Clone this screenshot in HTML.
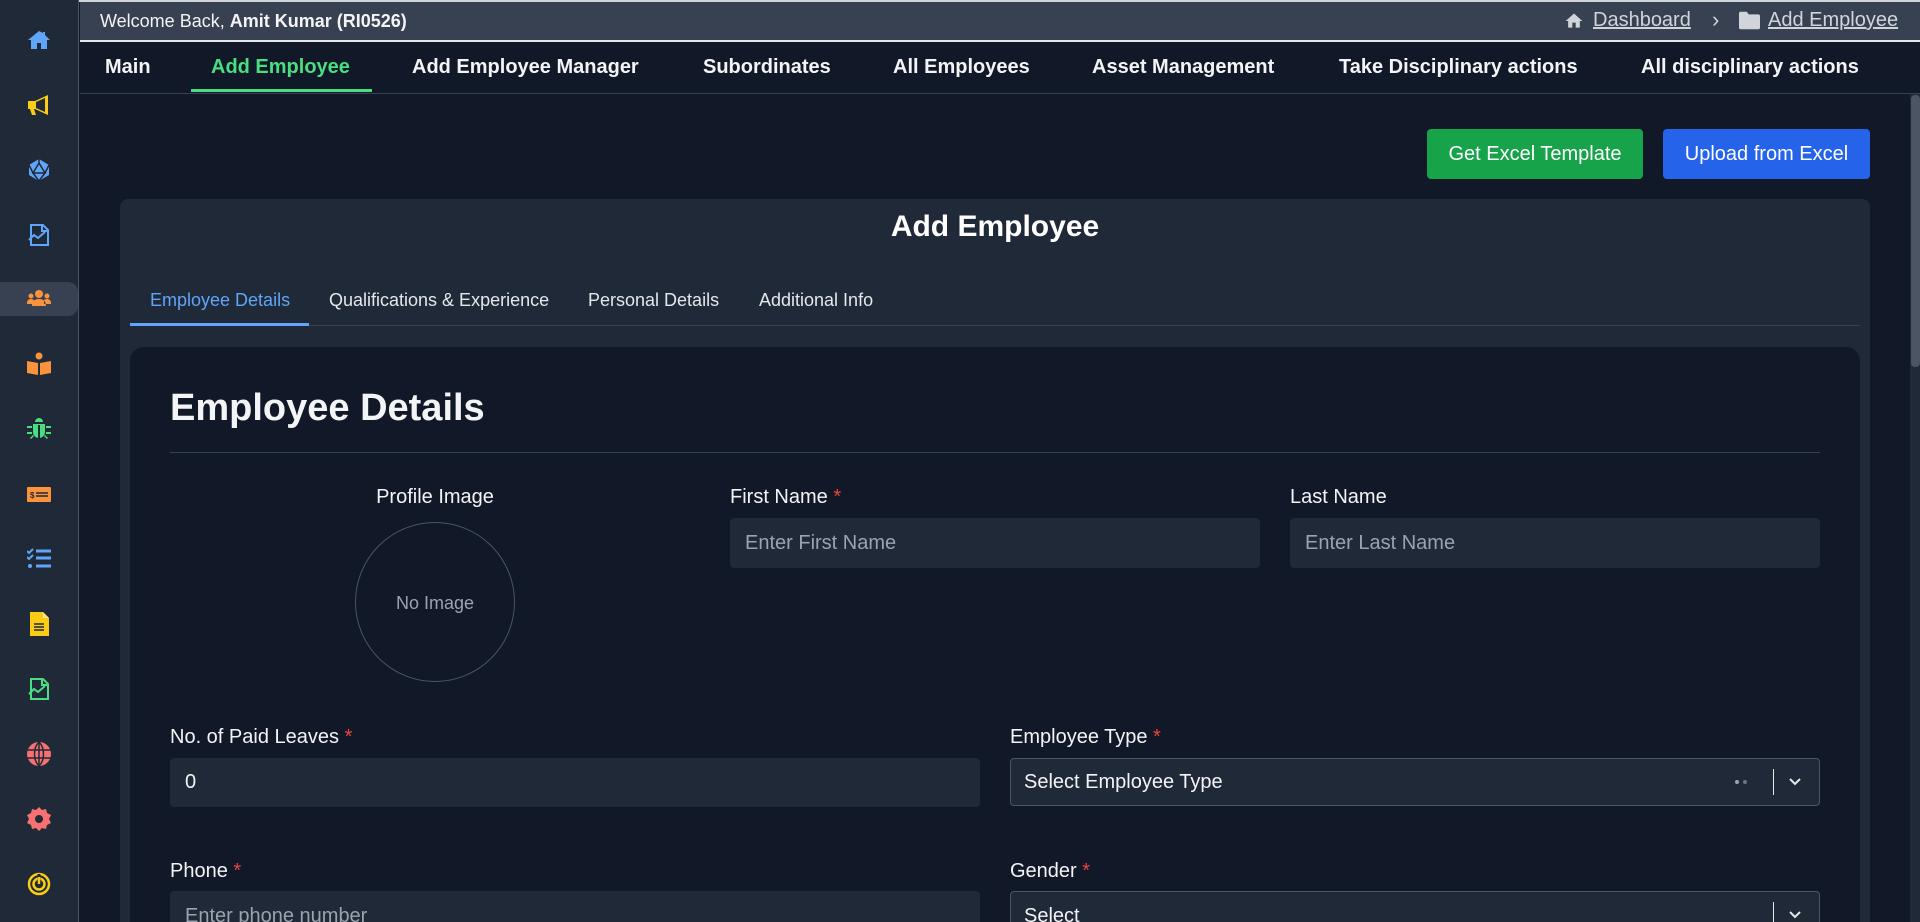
<!DOCTYPE html>
<html style="width:1920px;height:922px;overflow:hidden"><head><meta charset="utf-8"><style>
*{box-sizing:border-box;margin:0;padding:0}
body{width:1920px;height:922px;overflow:hidden;background:#111827;font-family:"Liberation Sans",Arial,sans-serif;color:#f3f4f6;position:relative}
.a{position:absolute;white-space:nowrap}
.side{left:0;top:0;width:79px;height:922px;background:#1f2937;border-right:1px solid #4b5563}
.ic{position:absolute;left:27px;width:24px;height:24px}
.top{left:80px;top:2px;width:1840px;height:40px;background:#374151;border-bottom:2px solid #e5e7eb}
.nav{left:80px;top:44px;width:1840px;height:50px;background:#111827;border-bottom:1px solid #374151}
.ni{position:absolute;top:12px;font-size:20px;font-weight:bold;color:#f3f4f6}
.lbl{font-size:20px;color:#f3f4f6}
.req{color:#ef4444}
.inp{background:#1f2937;border-radius:4px;font-size:20px;color:#9ca3af;padding-left:15px;display:flex;align-items:center}
.tab{position:absolute;top:290px;font-size:18px;color:#e5e7eb}
</style></head><body>
<div class="a" style="left:0;top:0;width:1920px;height:2px;background:#d1d5db"></div>
<div class="a side">
<div class="a" style="left:0;top:282px;width:78px;height:34px;background:#374151;border-radius:0 10px 10px 0"></div>
<svg class="ic" style="top:28px" viewBox="0 0 24 24"><path d="M12 3L1 12h3v9h6v-6h4v6h6v-9h3L18 7V4h-2v1z" fill="#60a5fa"/></svg>
<svg class="ic" style="top:93px" viewBox="0 0 24 24"><path d="M1 8h7l13-6v20L8 16H7l2 6H5l-2-6H1z" fill="#facc15"/><path d="M9 9v6l9 4V5z" fill="#1f2937"/></svg>
<svg class="ic" style="top:158px" viewBox="0 0 24 24"><polygon points="12,1 22,7 22,17 12,23 2,17 2,7" fill="#60a5fa"/><path d="M12 5L6 15h12z M12 1v4 M2 7l4 8 M22 7l-4 8 M6 15l6 8 6-8" stroke="#1f2937" stroke-width="1.5" fill="none"/></svg>
<svg class="ic" style="top:223px" viewBox="0 0 24 24"><path d="M4 2h12l5 5v15H4z M15 2v6h6" stroke="#60a5fa" stroke-width="2" fill="none"/><path d="M2 17l5-5 4 3 7-6" stroke="#60a5fa" stroke-width="2" fill="none"/></svg>
<svg class="ic" style="top:287px" viewBox="0 0 24 24"><circle cx="12" cy="7" r="4" fill="#fb923c"/><circle cx="4" cy="9" r="2.5" fill="#fb923c"/><circle cx="20" cy="9" r="2.5" fill="#fb923c"/><path d="M5 19c0-5 3-7 7-7s7 2 7 7z M0 16c0-3 2-4 4-4s3 1 3 2v3H0z M24 16c0-3-2-4-4-4s-3 1-3 2v3h7z" fill="#fb923c"/></svg>
<svg class="ic" style="top:352px" viewBox="0 0 24 24"><circle cx="12" cy="4" r="3.5" fill="#fb923c"/><path d="M0 9l11 2v12L0 21z M24 9l-11 2v12l11-2z" fill="#fb923c"/></svg>
<svg class="ic" style="top:417px" viewBox="0 0 24 24"><path d="M8 5a4 4 0 0 1 8 0z M6 7h12v8a6 6 0 0 1-12 0z M0 9h5v2H0z M19 9h5v2h-5z M0 15h5v2H0z M19 15h5v2h-5z M3 21l3-3 1 1-3 3z M21 21l-3-3-1 1 3 3z" fill="#4ade80"/><rect x="11" y="8" width="2" height="13" fill="#1f2937"/></svg>
<svg class="ic" style="top:482px" viewBox="0 0 24 24"><rect x="0" y="5" width="24" height="15" rx="1" fill="#fb923c"/><text x="3" y="16" font-size="8" font-weight="bold" fill="#1f2937" font-family="Liberation Sans">$</text><path d="M9 11h12 M9 14h12" stroke="#1f2937" stroke-width="1.5"/></svg>
<svg class="ic" style="top:547px" viewBox="0 0 24 24"><path d="M0 4l2 2 4-4 M0 10l2 2 4-4" stroke="#60a5fa" stroke-width="2" fill="none"/><circle cx="3" cy="19" r="2" fill="#60a5fa"/><path d="M9 4h15 M9 11h15 M9 19h15" stroke="#60a5fa" stroke-width="3"/></svg>
<svg class="ic" style="top:612px" viewBox="0 0 24 24"><path d="M3 0h13l6 6v18H3z" fill="#facc15"/><path d="M16 0v6h6" fill="#fde68a"/><path d="M7 12h10 M7 15h10 M7 18h10" stroke="#1f2937" stroke-width="1.5"/></svg>
<svg class="ic" style="top:677px" viewBox="0 0 24 24"><path d="M4 2h12l5 5v15H4z M15 2v6h6" stroke="#4ade80" stroke-width="2" fill="none"/><path d="M2 17l5-5 4 3 7-6" stroke="#4ade80" stroke-width="2" fill="none"/></svg>
<svg class="ic" style="top:742px" viewBox="0 0 24 24"><circle cx="12" cy="12" r="12" fill="#f87171"/><path d="M0 8h24 M0 16h24 M12 0v24 M12 0c-6 6-6 18 0 24 M12 0c6 6 6 18 0 24" stroke="#1f2937" stroke-width="1.5" fill="none"/></svg>
<svg class="ic" style="top:807px" viewBox="0 0 24 24"><path d="M12 0l3 3 4-1 1 4 4 2-2 4 2 4-4 2-1 4-4-1-3 3-3-3-4 1-1-4-4-2 2-4-2-4 4-2 1-4 4 1z" fill="#f87171"/><circle cx="12" cy="12" r="4" fill="#1f2937"/></svg>
<svg class="ic" style="top:872px" viewBox="0 0 24 24"><circle cx="12" cy="12" r="10" stroke="#facc15" stroke-width="2.5" fill="none"/><circle cx="12" cy="12" r="5.5" stroke="#facc15" stroke-width="2.5" fill="none"/><path d="M12 2v10" stroke="#1f2937" stroke-width="3"/><path d="M12 5v7" stroke="#facc15" stroke-width="2.5"/></svg>
</div>
<div class="a top">
<div class="a" style="left:20px;top:9px;font-size:18px;color:#f3f4f6">Welcome Back, <b>Amit Kumar (RI0526)</b></div>
<svg class="a" style="left:1484px;top:9px" width="20" height="20" viewBox="0 0 24 24"><path d="M12 3L2 12h3v8h5v-6h4v6h5v-8h3z" fill="#d1d5db"/></svg>
<div class="a" style="left:1513px;top:7px;font-size:20px;color:#d1d5db;text-decoration:underline">Dashboard</div>
<div class="a" style="left:1632px;top:5px;font-size:22px;color:#d1d5db">›</div>
<svg class="a" style="left:1659px;top:9px" width="21" height="19" viewBox="0 0 24 20"><path d="M0 2a2 2 0 0 1 2-2h7l2 3h11a2 2 0 0 1 2 2v13a2 2 0 0 1-2 2H2a2 2 0 0 1-2-2z" fill="#d1d5db"/></svg>
<div class="a" style="left:1688px;top:7px;font-size:20px;color:#d1d5db;text-decoration:underline">Add Employee</div>
</div>
<div class="a nav">
<div class="ni" style="left:25px">Main</div>
<div class="ni" style="left:131px;color:#4ade80">Add Employee</div>
<div class="a" style="left:111px;top:45px;width:181px;height:3px;background:#4ade80"></div>
<div class="ni" style="left:332px">Add Employee Manager</div>
<div class="ni" style="left:623px">Subordinates</div>
<div class="ni" style="left:813px">All Employees</div>
<div class="ni" style="left:1012px">Asset Management</div>
<div class="ni" style="left:1259px">Take Disciplinary actions</div>
<div class="ni" style="left:1561px">All disciplinary actions</div>
</div>
<div class="a" style="left:1910px;top:94px;width:10px;height:828px;background:#1f2937"></div>
<div class="a" style="left:1911px;top:95px;width:9px;height:272px;background:#4b5563;border-radius:4px"></div>
<div class="a" style="left:1427px;top:129px;width:216px;height:50px;background:#16a34a;border-radius:4px;font-size:20px;color:#fff;text-align:center;line-height:50px">Get Excel Template</div>
<div class="a" style="left:1663px;top:129px;width:207px;height:50px;background:#2563eb;border-radius:4px;font-size:20px;color:#fff;text-align:center;line-height:50px">Upload from Excel</div>
<div class="a" style="left:120px;top:199px;width:1750px;height:723px;background:#1f2937;border-radius:8px 8px 0 0"></div>
<div class="a" style="left:120px;top:210px;width:1750px;text-align:center;font-size:30px;font-weight:bold;color:#fff">Add Employee</div>
<div class="tab" style="left:150px;color:#60a5fa">Employee Details</div>
<div class="tab" style="left:329px">Qualifications &amp; Experience</div>
<div class="tab" style="left:588px">Personal Details</div>
<div class="tab" style="left:759px">Additional Info</div>
<div class="a" style="left:130px;top:325px;width:1730px;height:1px;background:#374151"></div>
<div class="a" style="left:130px;top:323px;width:179px;height:3px;background:#60a5fa"></div>
<div class="a" style="left:130px;top:347px;width:1730px;height:575px;background:#111827;border-radius:14px 14px 0 0"></div>
<div class="a" style="left:170px;top:387px;font-size:38px;font-weight:bold;color:#f3f4f6">Employee Details</div>
<div class="a" style="left:170px;top:452px;width:1650px;height:1px;background:#374151"></div>
<div class="a lbl" style="left:335px;top:486px;width:200px;text-align:center">Profile Image</div>
<div class="a" style="left:355px;top:522px;width:160px;height:160px;border:1px solid #4b5563;border-radius:50%;font-size:18px;color:#9ca3af;text-align:center;line-height:160px">No Image</div>
<div class="a lbl" style="left:730px;top:486px">First Name <span class="req">*</span></div>
<div class="a inp" style="left:730px;top:518px;width:530px;height:50px">Enter First Name</div>
<div class="a lbl" style="left:1290px;top:486px">Last Name</div>
<div class="a inp" style="left:1290px;top:518px;width:530px;height:50px">Enter Last Name</div>
<div class="a lbl" style="left:170px;top:726px">No. of Paid Leaves <span class="req">*</span></div>
<div class="a inp" style="left:170px;top:758px;width:810px;height:49px;color:#f3f4f6">0</div>
<div class="a lbl" style="left:1010px;top:726px">Employee Type <span class="req">*</span></div>
<div class="a inp" style="left:1010px;top:758px;width:810px;height:48px;border:1px solid #4b5563;color:#f3f4f6;padding-left:13px">Select Employee Type</div>
<div class="a" style="left:1735px;top:780px;width:4px;height:4px;border-radius:50%;background:#9ca3af"></div>
<div class="a" style="left:1743px;top:780px;width:4px;height:4px;border-radius:50%;background:#6b7280"></div>
<div class="a" style="left:1773px;top:769px;width:1px;height:26px;background:#e5e7eb"></div>
<svg class="a" style="left:1788px;top:776px" width="14" height="12" viewBox="0 0 14 12"><path d="M2 3l5 5 5-5" stroke="#e5e7eb" stroke-width="2" fill="none"/></svg>
<div class="a lbl" style="left:170px;top:860px">Phone <span class="req">*</span></div>
<div class="a inp" style="left:170px;top:891px;width:810px;height:50px;align-items:flex-start;padding-top:14px">Enter phone number</div>
<div class="a lbl" style="left:1010px;top:860px">Gender <span class="req">*</span></div>
<div class="a inp" style="left:1010px;top:891px;width:810px;height:50px;border:1px solid #4b5563;color:#f3f4f6;padding-left:13px;align-items:flex-start;padding-top:13px">Select</div>
<div class="a" style="left:1773px;top:902px;width:1px;height:26px;background:#e5e7eb"></div>
<svg class="a" style="left:1788px;top:909px" width="14" height="12" viewBox="0 0 14 12"><path d="M2 3l5 5 5-5" stroke="#e5e7eb" stroke-width="2" fill="none"/></svg>
</body></html>
